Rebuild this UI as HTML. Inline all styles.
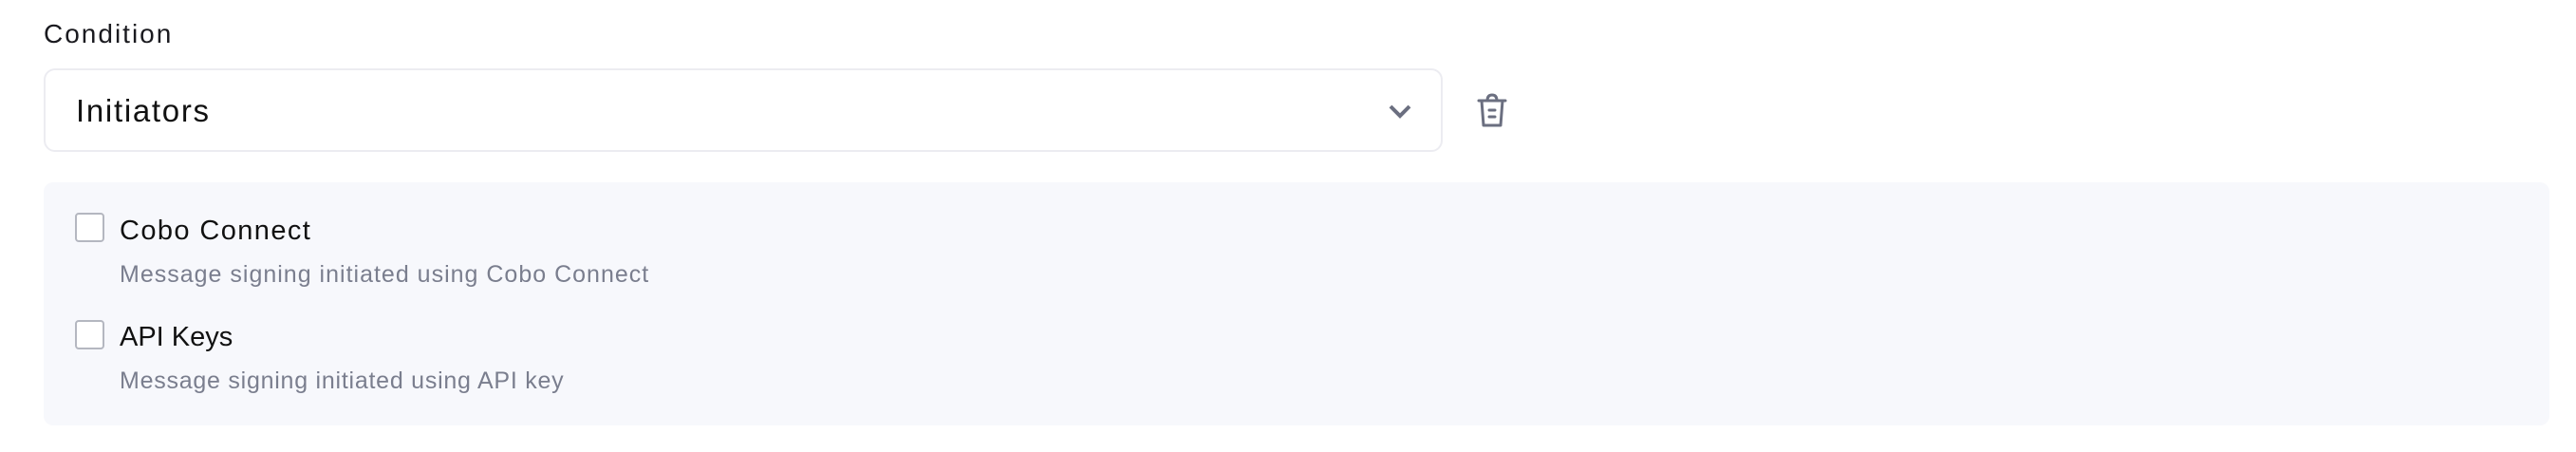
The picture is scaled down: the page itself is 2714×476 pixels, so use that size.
<!DOCTYPE html>
<html><head><style>
body{margin:0;width:2714px;height:476px;background:#fff;font-family:"Liberation Sans",sans-serif;position:relative;overflow:hidden}
.a{position:absolute}
</style></head><body>
<div class="a" style="left:46px;top:20px;font-size:28px;color:#1a1a1f;letter-spacing:2px;">Condition</div>
<div class="a" style="left:46px;top:72px;width:1470px;height:84px;border:2px solid #ececf1;border-radius:12px;"></div>
<div class="a" style="left:80px;top:98px;font-size:33px;color:#111;letter-spacing:1.7px;">Initiators</div>
<svg class="a" style="left:1460px;top:104px" width="30" height="26" viewBox="0 0 30 26"><path d="M5 8 L15 18 L25 8" fill="none" stroke="#6b6f80" stroke-width="4"/></svg>
<svg class="a" style="left:1555px;top:96px" width="34" height="40" viewBox="0 0 34 40"><path d="M3 10 H31 M12 10 Q12 4 17 4 Q22 4 22 10 M6 10 L8 36 H26 L28 10 M14 20 H20 M14 27 H20" fill="none" stroke="#6b6f80" stroke-width="3" stroke-linecap="round" stroke-linejoin="round"/></svg>
<div class="a" style="left:46px;top:192px;width:2640px;height:256px;background:#f7f8fc;border-radius:10px;"></div>
<div class="a" style="left:79px;top:224px;width:27px;height:27px;border:2px solid #b4b7c0;border-radius:4px;background:#fff;"></div>
<div class="a" style="left:126px;top:227px;font-size:29px;color:#111;letter-spacing:1.4px;">Cobo Connect</div>
<div class="a" style="left:126px;top:275px;font-size:25px;color:#7a7e8e;letter-spacing:1px;">Message signing initiated using Cobo Connect</div>
<div class="a" style="left:79px;top:337px;width:27px;height:27px;border:2px solid #b4b7c0;border-radius:4px;background:#fff;"></div>
<div class="a" style="left:126px;top:339px;font-size:29px;color:#111;">API Keys</div>
<div class="a" style="left:126px;top:387px;font-size:25px;color:#7a7e8e;letter-spacing:0.75px;">Message signing initiated using API key</div>
</body></html>
